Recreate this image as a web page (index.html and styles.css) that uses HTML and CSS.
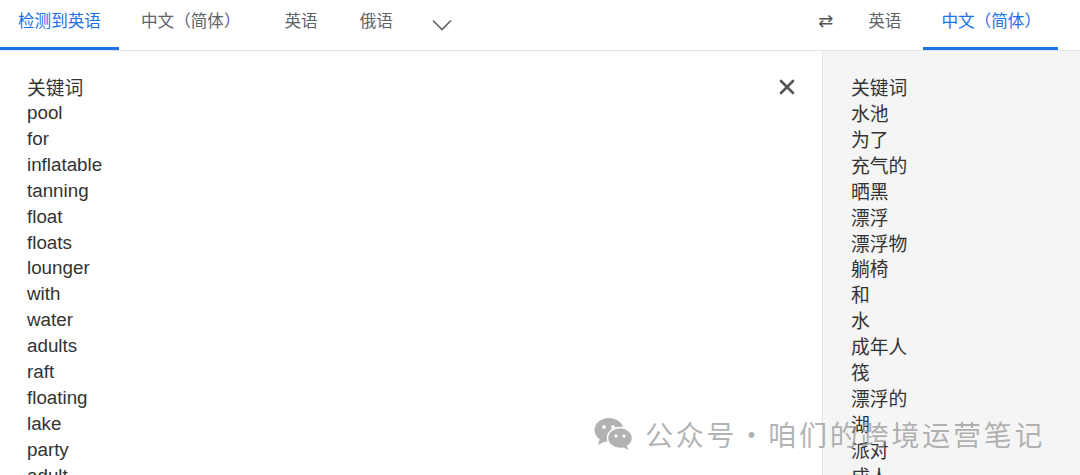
FILE: index.html
```html
<!DOCTYPE html>
<html lang="zh-CN">
<head>
  <meta charset="UTF-8" />
  <meta name="viewport" content="width=device-width, initial-scale=1.0"/>
  <title>翻译</title>
  <link rel="stylesheet" href="styles.css">
</head>
<body>
  <header class="lang-bar">
    <nav class="tabs">
      <a class="tab first active">检测到英语</a>
      <a class="tab">中文（简体）</a>
      <a class="tab">英语</a>
      <a class="tab narrow">俄语</a>
      <span class="tab more">
        <svg width="20" height="12" viewBox="0 0 20 12"><path d="M1 1.5 L10 10.5 L19 1.5" fill="none" stroke="#5f6368" stroke-width="1.6"/></svg>
      </span>
    </nav>
    <nav class="tabs right">
      <span class="tab swap">⇄</span>
      <a class="tab">英语</a>
      <a class="tab active last">中文（简体）</a>
    </nav>
  </header>
  <main class="panes">
    <section class="pane source">
      <div class="words">
        <div class="zh">关键词</div>
        <div>pool</div>
        <div>for</div>
        <div>inflatable</div>
        <div>tanning</div>
        <div>float</div>
        <div>floats</div>
        <div>lounger</div>
        <div>with</div>
        <div>water</div>
        <div>adults</div>
        <div>raft</div>
        <div>floating</div>
        <div>lake</div>
        <div>party</div>
        <div>adult</div>
      </div>
      <button class="clear">
        <svg width="16" height="16" viewBox="0 0 16 16"><path d="M2 2 L14 14 M14 2 L2 14" stroke="#555" stroke-width="2.6" stroke-linecap="round"/></svg>
      </button>
    </section>
    <section class="pane target">
      <div class="words">
        <div>关键词</div>
        <div>水池</div>
        <div>为了</div>
        <div>充气的</div>
        <div>晒黑</div>
        <div>漂浮</div>
        <div>漂浮物</div>
        <div>躺椅</div>
        <div>和</div>
        <div>水</div>
        <div>成年人</div>
        <div>筏</div>
        <div>漂浮的</div>
        <div>湖</div>
        <div>派对</div>
        <div>成人</div>
      </div>
    </section>
  </main>
  <div class="watermark">
    <svg width="40" height="34" viewBox="0 0 40 34">
      <ellipse cx="15" cy="13" rx="14.5" ry="12" fill="#b2b2b2"/>
      <path d="M6 21 L4 28 L12 24 Z" fill="#b2b2b2"/>
      <ellipse cx="26" cy="21" rx="12.5" ry="10.5" fill="#b2b2b2" stroke="#fff" stroke-width="1.5"/>
      <path d="M32 28 L35 33 L28 30 Z" fill="#b2b2b2"/>
      <circle cx="10" cy="10" r="1.9" fill="#fff"/>
      <circle cx="19" cy="10" r="1.9" fill="#fff"/>
      <circle cx="22" cy="19" r="1.6" fill="#fff"/>
      <circle cx="30" cy="19" r="1.6" fill="#fff"/>
    </svg>
    <span>公众号・咱们的跨境运营笔记</span>
  </div>
</body>
</html>
```

FILE: styles.css
```css
* {margin: 0; padding: 0; box-sizing: border-box;}
body {
  font-family: "Liberation Sans", "Noto Sans CJK SC", sans-serif;
  color: #333;
  background: #fff;
  height: 475px;
  overflow: hidden;
  position: relative;
}
.lang-bar {
  height: 51px;
  display: flex;
  justify-content: space-between;
  border-bottom: 1px solid #e3e3e3;
}
.tabs {
  display: flex;
  height: 50px;
}
.tabs.right {
  margin-right: 22px;
}
.tab {
  display: flex;
  align-items: center;
  padding: 0 22px 7px;
  font-family: "Noto Sans CJK SC", sans-serif;
  font-size: 16.6px;
  color: #5f6368;
  text-decoration: none;
  border-bottom: 3px solid transparent;
  cursor: pointer;
}
.tab.first {
  padding: 0 18px 7px;
}
.tab.narrow {
  padding-left: 20px;
}
.tab.last {
  padding: 0 17px 7px 18px;
}
.tab.active {
  color: #1a73e8;
  border-bottom-color: #1a73e8;
}
.tab.more {
  padding: 6px 22px 3px 17px;
}
.tab.swap {
  padding: 0 13px 7px;
  font-family: "DejaVu Sans", sans-serif;
  font-size: 18px;
  color: #555;
}
.panes {
  display: flex;
  height: 424px;
}
.pane {
  padding: 23px 27px 0;
  font-size: 18.8px;
  line-height: 25.93px;
}
.words div {
  height: 25.93px;
}
.source {
  width: 822px;
  display: flex;
  justify-content: space-between;
  padding-right: 26px;
}
.target {
  flex: 1;
  background: #f5f5f5;
  border-left: 1px solid #e6e6e6;
  padding-left: 28px;
  font-family: "Noto Sans CJK SC", sans-serif;
}
.source .zh {
  font-family: "Noto Sans CJK SC", sans-serif;
}
.clear {
  background: none;
  border: none;
  width: 18px;
  height: 18px;
  margin-top: 5px;
  cursor: pointer;
}
.watermark {
  position: absolute;
  left: 594px;
  top: 414px;
  display: flex;
  align-items: center;
  gap: 11px;
  color: rgba(150, 150, 150, 0.72);
  font-family: "Noto Sans CJK SC", sans-serif;
  font-size: 28px;
  letter-spacing: 2.8px;
}
```
